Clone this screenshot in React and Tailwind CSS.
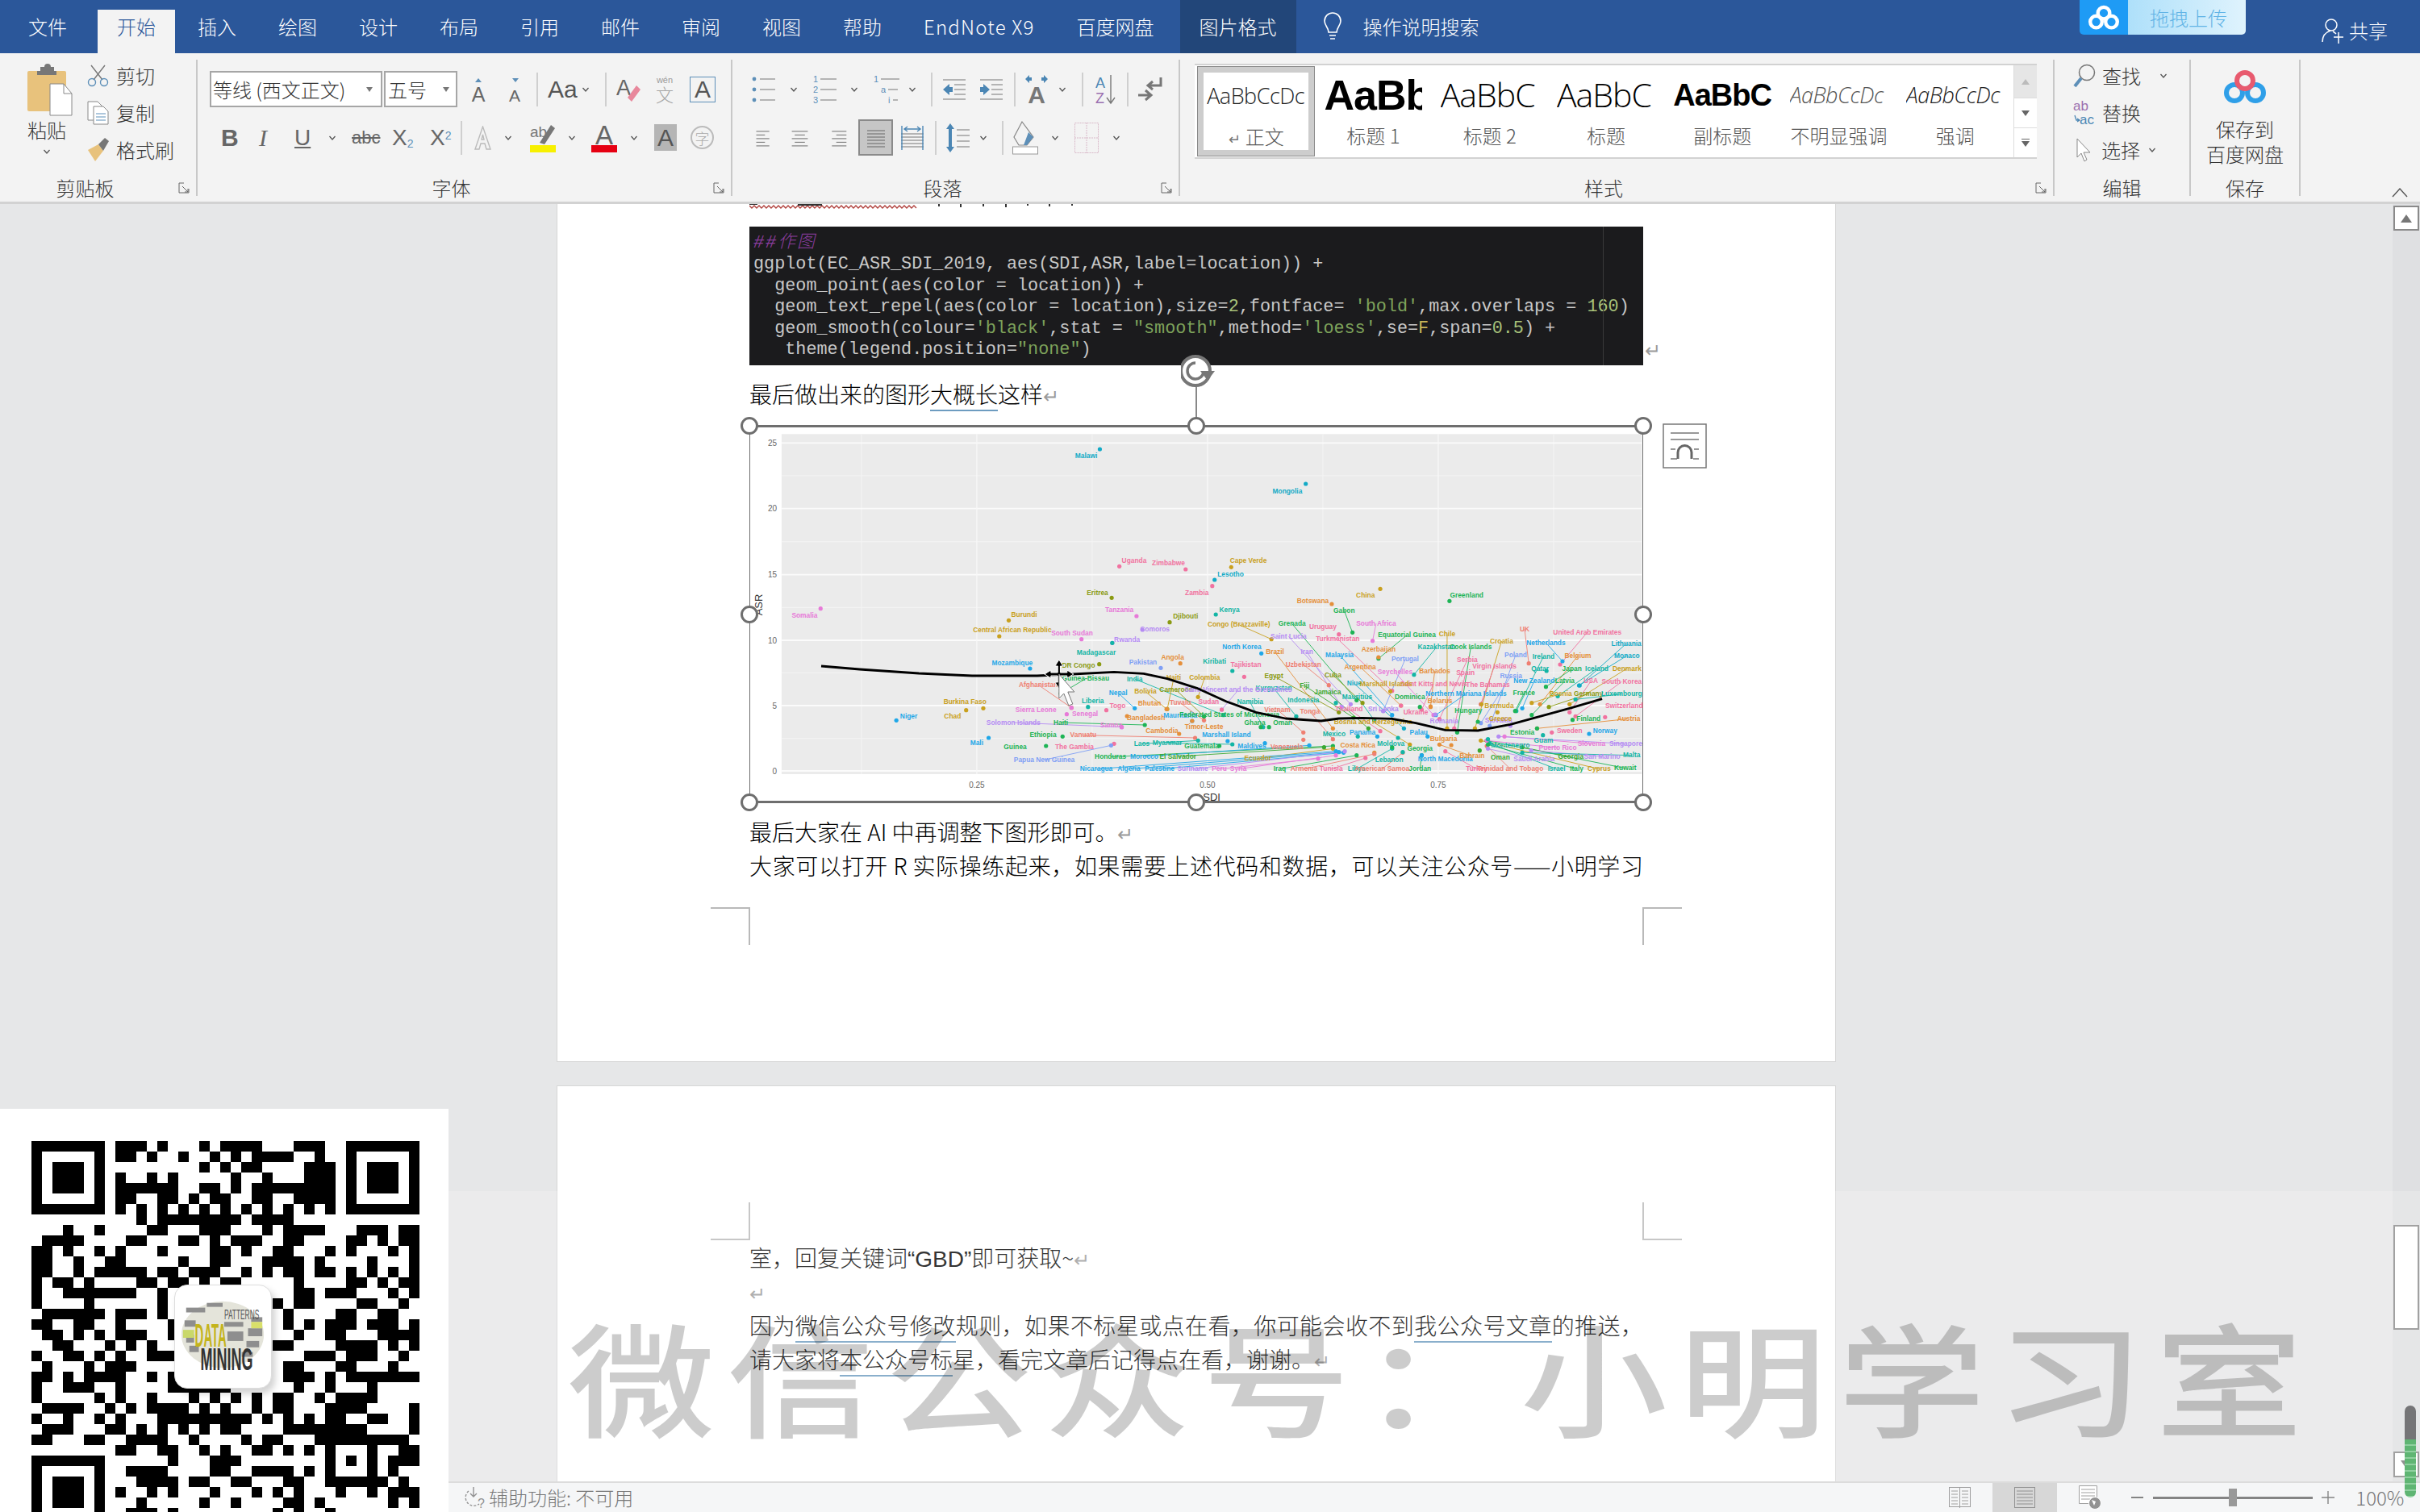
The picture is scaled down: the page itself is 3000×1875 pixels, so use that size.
const QR = [
  '1111111 0 111 0 1 000 1 0 1 111 000 111 00 1111111',
  '1000001 0 11 0 1 00 1 00 1 0 1 0 1111 00 1 00 1000001',
  '1011101 0 00000000 1 0 1 0 11 0000 111 0 1011101',
  '1011101 0 1 00 1 0 1 00000 1 00 1 000 111 0 1011101',
  '1011101 0 111111 00 11 0 1 0 11111111 0 1011101',
  '1000001 0 11 00 11 0 1 0 11 00 11 00 1111 0 1000001',
  '1111111 0 101010101010101010101 0 1111111',
  '0000000000 1 0 11111111 0 1111 000000000000',
  '000 1 00 1 0000 11 000 111 000 1 0 1111 000 111 0 11',
  '0 1111 0000 11 000 11 0 1 0 111 00 11 0000 11 0 1 0 11',
  '11 0 1 00 1 0 1 000 1 0000 11 0 1 00 11 000 1 0 1 000 1 0 1',
  '11 00 1 00 11 00000 1 00 11 000 1111 0 1 0000 1 000 1',
  '11 00 1 0 11111 0 11 0 111 00 1 0 1 0 11 0 11 0 1 0 1 0 1 0 1',
  '1 0 11 0 1 0000 11 0 11 0 1 0 11 00000 1 0000 11 0 1 0 11',
  '1 00 1111111 00 1 000000000000 11 0 111 000 1 0 1',
  '1 0000 1 000000 1 0000000000 1 0 11 0000 11 00 1 0',
  '0 111111 0 111 0 1 00000000000 1 0000 11 00 11 00',
  '11 00 11 00 1 0000 1 0000000000 1 0 1 0 111 0 111 0 1',
  '0 11 0 1 0 1 0 111 00 1 00000000000 1 00 11 000 1111',
  '00 11 000 1 0 1 0 1 00 000000000 11 0000 1111 0 1 0 1',
  '1 00 11 0 1 0 1 00 111 000000000000 111 0 111 00 1 0',
  '0 1 000 1 0 111 0000 0000000000 11 000 11 000 1 00',
  '11 0 1 0 1111 00 1 0 1 0000000000 111 0 1 0 1111111',
  '1 00 111 00 1 0000 111111 000000 1 00 1 000 1 0000',
  '1 00000 1 0 1 00 1 000 1 0 1 0 1 0 1 0 11 00 1 0 1111 0000',
  '0 1111 00 1 0 1 0 1111 0 1 0 1 00 1 0 11 000 1111 0000 1',
  '1 00 1 00 1 0 1 000 111111111 0 1 0 1 0 1 0 11 00 11 00 1',
  '0 111 000 11 0 1 0 1 0 1 0 1 0 11 0000 11111111 0000 1',
  '11 000 11 00 1111 00 1 0000 1 0 11 000 111111111 0',
  '00000000 11 00 11 00 1 0 1 00 11 0 1 0 1 0 1 000 1 00 11',
  '1111111 0 00000 1 000 111 00000000 1 0 1 0 1 0 111',
  '1000001 0 0 1111 0000 11 00 1111 0 1 0 1 000 1 0 1 00',
  '1011101 0 00 1111 0 11 00 11 000 11 00 111111 0 1 0',
  '1011101 0 1 00 1 0 1 000 1 000 1 0 1 0 1 000 1 00 1 0 111',
  '1011101 0 00 1 00000 1 00 1 0000 11 0 1 000000 1 0 1',
  '1000001 0 0 111 0 1 000000000 1 0 1 00 1 00000000',
].map((r) => r.replace(/ /g, ''))

const C = {
  b: '#1fa7e8', c: '#12aac6', t: '#12b5a5', g: '#1db455', G: '#3aa832', l: '#8a9a12', o: '#c9a01e',
  O: '#e58f3a', r: '#ef7f72', k: '#f172a0', p: '#e77ad8', v: '#b58cf3', n: '#7f9ff5',
}

// label, x, y, colour, point x, point y  (taken from the plot, x at 1.3635x and y at 3x)
const LABELS = [
  ['Somalia', 107, 731, 'p', 134, 704], ['Malawi', 583, 135, 'c', 606, 111], ['Mongolia', 923, 267, 'c', 954, 240],
  ['Uganda', 664, 527, 'k', 639, 547], ['Zimbabwe', 722, 535, 'k', 751, 558], ['Cape Verde', 857, 527, 'o', 828, 550],
  ['Lesotho', 827, 577, 'c', 800, 597], ['Zambia', 770, 647, 'k', 796, 620], ['Eritrea', 602, 647, 'l', 626, 664],
  ['China', 1055, 655, 'o', 1080, 631], ['Greenland', 1226, 655, 'g', 1197, 676], ['Botswana', 966, 675, 'O', 998, 687],
  ['Tanzania', 639, 708, 'p', 668, 732], ['Kenya', 825, 709, 't', 802, 726], ['Gabon', 1019, 711, 'g', 1033, 793],
  ['Burundi', 478, 728, 'o', 452, 748], ['Djibouti', 751, 734, 'l', 724, 755], ['Congo (Brazzaville)', 841, 764, 'o', 896, 818],
  ['Grenada', 931, 761, 'g', 1040, 1045], ['Uruguay', 983, 773, 'k', 1010, 800], ['South Africa', 1073, 759, 'p', 1067, 824],
  ['Comoros', 699, 781, 'v', 678, 783], ['Central African Republic', 458, 784, 'o', 436, 807], ['South Sudan', 559, 795, 'p', 575, 818],
  ['Rwanda', 652, 820, 'v', 627, 832], ['Equatorial Guinea', 1125, 803, 'g', 1077, 890], ['Chile', 1193, 800, 'o', 1193, 1150],
  ['UK', 1324, 781, 'r', 1331, 908], ['United Arab Emirates', 1430, 792, 'k', 1384, 912], ['Lithuania', 1496, 834, 'c', 1417, 990],
  ['Saint Lucia', 925, 808, 'v', 1030, 1060], ['Turkmenistan', 1008, 817, 'k', 1100, 1010], ['Croatia', 1285, 825, 'o', 1240, 1150],
  ['Netherlands', 1360, 831, 'b', 1388, 900], ['Madagascar', 600, 868, 't', 627, 832], ['North Korea', 846, 848, 'b', 879, 871],
  ['Iran', 956, 865, 'v', 1015, 1070], ['Azerbaijan', 1077, 857, 'O', 1077, 885], ['Kazakhstan', 1175, 848, 't', 1137, 950],
  ['Cook Islands', 1233, 848, 'g', 1210, 1165], ['Brazil', 902, 866, 'O', 1000, 1150], ['Malaysia', 1011, 876, 'b', 1100, 1100],
  ['Poland', 1309, 876, 'n', 1265, 1140], ['Ireland', 1356, 882, 't', 1310, 1085], ['Belgium', 1414, 879, 'O', 1350, 1060],
  ['Monaco', 1497, 879, 'c', 1416, 990], ['Mozambique', 458, 907, 'b', 488, 927], ['DR Congo', 570, 915, 'l', 605, 911],
  ['Pakistan', 679, 904, 'n', 709, 925], ['Angola', 729, 885, 'O', 742, 908], ['Kiribati', 800, 901, 't', 830, 936],
  ['Tajikistan', 853, 912, 'k', 850, 958], ['Portugal', 1122, 893, 'n', 1085, 1085], ['Serbia', 1227, 896, 'k', 1180, 1115],
  ['Uzbekistan', 950, 912, 'r', 993, 989], ['Virgin Islands', 1273, 918, 'k', 1250, 1060], ['Denmark', 1497, 927, 'o', 1400, 1060],
  ['Iceland', 1446, 927, 't', 1380, 1030], ['Japan', 1404, 929, 'g', 1360, 995], ['Qatar', 1350, 927, 't', 1361, 936],
  ['Seychelles', 1105, 941, 'p', 1170, 1100], ['Argentina', 1046, 921, 'O', 1115, 1065], ['Barbados', 1172, 937, 'O', 1165, 1068],
  ['Spain', 1224, 944, 'k', 1205, 1150], ['Russia', 1301, 954, 'n', 1250, 1130], ['Guinea-Bissau', 582, 965, 'g', 540, 1020],
  ['India', 665, 966, 't', 815, 1100], ['Colombia', 783, 962, 'o', 772, 1033], ['Haiti', 731, 962, 'o', 720, 1078],
  ['Egypt', 900, 955, 'l', 1010, 1090], ['Afghanistan', 502, 988, 'r', 558, 1073], ['New Zealand', 1340, 974, 'b', 1320, 1075],
  ['Latvia', 1392, 974, 'g', 1336, 1100], ['USA', 1436, 974, 'k', 1400, 1090], ['South Korea', 1488, 976, 'k', 1410, 1105],
  ['Fiji', 952, 991, 'G', 1035, 1110], ['Niue', 1036, 983, 'c', 1120, 1150], ['Saint Kitts and Nevis', 1170, 985, 'k', 1150, 1080],
  ['Marshall Islands', 1090, 985, 'o', 1097, 1012], ['The Bahamas', 1262, 988, 'k', 1250, 1060], ['Kyrgyzstan', 900, 1001, 't', 938, 1105],
  ['Nepal', 637, 1018, 'b', 665, 1075], ['Bolivia', 683, 1013, 'o', 719, 1078], ['Cameroon', 735, 1007, 'l', 782, 1105],
  ['Saint Vincent and the Grenadines', 840, 1007, 'v', 812, 1080], ['Jamaica', 991, 1016, 'G', 1060, 1150], ['Dominica', 1130, 1032, 'g', 1147, 1070],
  ['Mauritius', 1041, 1032, 't', 1070, 1120], ['France', 1323, 1019, 'g', 1308, 1085], ['Bosnia', 1385, 1021, 'o', 1336, 1055],
  ['Germany', 1432, 1021, 'l', 1365, 1070], ['Luxembourg', 1488, 1022, 't', 1410, 1042], ['Northern Mariana Islands', 1225, 1021, 'b', 1174, 1100],
  ['Indonesia', 950, 1044, 't', 1005, 1055], ['Sudan', 790, 1052, 'k', 812, 1080], ['Tuvalu', 742, 1055, 'r', 782, 1120], ['Namibia', 860, 1052, 't', 882, 1145],
  ['Burkina Faso', 378, 1052, 'o', 380, 1082], ['Liberia', 594, 1047, 't', 586, 1070], ['Togo', 636, 1067, 'k', 617, 1082],
  ['Bhutan', 690, 1057, 'O', 719, 1078], ['Thailand', 1027, 1078, 'k', 1080, 1160], ['Sri Lanka', 1085, 1077, 'v', 1085, 1085],
  ['Vietnam', 906, 1080, 'r', 950, 1165], ['Tonga', 961, 1087, 'r', 1000, 1190], ['Hungary', 1229, 1084, 'g', 1245, 1125], ['Bermuda', 1281, 1067, 'o', 1251, 1060],
  ['Chad', 357, 1105, 'o', 409, 1075], ['Niger', 283, 1106, 'b', 262, 1120], ['Sierra Leone', 498, 1080, 'p', 550, 1097],
  ['Senegal', 581, 1095, 'p', 558, 1073], ['Bangladesh', 684, 1111, 'O', 652, 1104], ['Mauritania', 742, 1103, 'b', 762, 1122],
  ['Federated States of Micronesia', 825, 1100, 'g', 782, 1105], ['Solomon Islands', 460, 1128, 'v', 643, 1145], ['Haiti', 540, 1128, 'g', 682, 1137],
  ['Samoa', 625, 1137, 'p', 643, 1145], ['Timor-Leste', 782, 1144, 'O', 762, 1122], ['Cambodia', 711, 1159, 'O', 740, 1170],
  ['Ethiopia', 510, 1175, 'g', 543, 1180], ['Vanuatu', 578, 1175, 'r', 767, 1185], ['Marshall Island', 820, 1173, 'b', 822, 1197],
  ['Mali', 398, 1203, 'b', 418, 1185], ['Guinea', 463, 1220, 'g', 515, 1215], ['The Gambia', 563, 1220, 'k', 630, 1207],
  ['Laos', 677, 1207, 't', 772, 1195], ['Myanmar', 720, 1204, 't', 830, 1209], ['Guatemala', 778, 1217, 'g', 808, 1215],
  ['Maldives', 863, 1217, 'b', 885, 1205], ['Venezuela', 922, 1220, 'r', 950, 1192], ['Costa Rica', 1042, 1214, 'O', 1070, 1240],
  ['Papua New Guinea', 512, 1267, 'n', 625, 1213], ['Honduras', 624, 1256, 'g', 1000, 1215], ['Morocco', 681, 1254, 'b', 960, 1213],
  ['El Salvador', 738, 1254, 'G', 985, 1220], ['Ecuador', 873, 1262, 'o', 1000, 1225], ['Nicaragua', 600, 1301, 'b', 1005, 1235],
  ['Algeria', 655, 1301, 'b', 1010, 1238], ['Palestine', 707, 1301, 'b', 1018, 1240], ['Suriname', 763, 1301, 'v', 1020, 1235],
  ['Peru', 808, 1301, 'p', 975, 1262], ['Syria', 840, 1301, 'p', 1005, 1250], ['Iraq', 910, 1301, 'g', 1040, 1250],
  ['Armenia', 951, 1301, 'r', 1070, 1245], ['Tunisia', 997, 1301, 'k', 1055, 1260], ['Libya', 1040, 1301, 't', 1100, 1225],
  ['American Samoa', 1083, 1301, 'r', 1118, 1240], ['Jordan', 1147, 1301, 'g', 1150, 1250], ['Turkey', 1243, 1301, 'k', 1190, 1235],
  ['Trinidad and Tobago', 1300, 1301, 'r', 1260, 1215], ['Israel', 1378, 1301, 't', 1265, 1205], ['Italy', 1412, 1301, 'g', 1262, 1210],
  ['Cyprus', 1450, 1301, 'o', 1250, 1195], ['Kuwait', 1494, 1298, 'g', 1260, 1195], ['Lebanon', 1095, 1267, 't', 1118, 1238],
  ['North Macedonia', 1190, 1265, 'b', 1150, 1250], ['Bahrain', 1235, 1253, 'O', 1180, 1210], ['Oman', 1283, 1257, 'G', 1248, 1232],
  ['Saudi Arabia', 1340, 1265, 'v', 1262, 1225], ['Georgia', 1402, 1256, 'G', 1320, 1220], ['San Marino', 1455, 1254, 'v', 1335, 1232],
  ['Malta', 1505, 1250, 't', 1320, 1240], ['Slovenia', 1437, 1207, 'p', 1290, 1180], ['Singapore', 1495, 1207, 'v', 1280, 1180],
  ['Puerto Rico', 1380, 1222, 'p', 1260, 1195], ['Norway', 1460, 1159, 'b', 1433, 1170], ['Sweden', 1400, 1159, 'k', 1370, 1165],
  ['Finland', 1432, 1113, 'g', 1405, 1118], ['Austria', 1500, 1114, 'O', 1345, 1150], ['Switzerland', 1492, 1067, 'k', 1460, 1108],
  ['Estonia', 1320, 1165, 'g', 1345, 1150], ['Guam', 1356, 1195, 't', 1355, 1175], ['Montenegro', 1300, 1212, 't', 1262, 1190],
  ['Georgia', 1147, 1226, 'g', 1100, 1220], ['Moldova', 1098, 1208, 't', 1110, 1185], ['Bulgaria', 1187, 1190, 'O', 1200, 1212],
  ['Palau', 1145, 1164, 'b', 1160, 1180], ['Panama', 1050, 1164, 'b', 1075, 1180], ['Mexico', 1002, 1170, 't', 1042, 1180],
  ['Cuba', 1000, 951, 'l', 1050, 1055], ['Slovakia', 1280, 1120, 'v', 1300, 1140], ['Romania', 1188, 1122, 'v', 1173, 1098],
  ['Ukraine', 1140, 1090, 'k', 1115, 1065], ['Bosnia and Herzegovina', 1068, 1126, 'o', 1130, 1210], ['Greece', 1283, 1113, 'o', 1278, 1090],
  ['Belarus', 1181, 1047, 'O', 1165, 1070], ['Oman', 915, 1128, 'g', 892, 1145], ['Ghana', 868, 1128, 'g', 878, 1145],
]

const SMOOTH = [[135, 918], [200, 930], [300, 945], [390, 954], [500, 954], [560, 948], [630, 940], [680, 946], [720, 965], [770, 1000], [820, 1050], [870, 1090], [920, 1113], [980, 1122], [1010, 1113], [1050, 1111], [1100, 1114], [1140, 1130], [1190, 1156], [1245, 1158], [1300, 1135], [1350, 1105], [1400, 1075], [1455, 1040]]

const px = (x) => x / 1.3635
const py = (y) => y / 3

function Plot() {
  return (
    <svg className="absolute left-[-11px] top-[-10px] w-[1150px] h-[500px]" viewBox="0 0 1150 500">
      <rect x={px(68)} y={py(55)} width={px(1522) - px(68)} height={py(1320) - py(55)} fill="#ebebeb" />
      {[210, 455, 700, 943, 1187].map((y) => <line key={y} x1={px(68)} x2={px(1522)} y1={py(y)} y2={py(y)} stroke="#f4f4f4" strokeWidth="1" />)}
      {[203, 593, 983, 1373].map((x) => <line key={x} x1={px(x)} x2={px(x)} y1={py(55)} y2={py(1320)} stroke="#f4f4f4" strokeWidth="1" />)}
      {[88, 332, 578, 822, 1065, 1308].map((y) => <line key={y} x1={px(68)} x2={px(1522)} y1={py(y)} y2={py(y)} stroke="#fbfbfb" strokeWidth="1.8" />)}
      {[398, 788, 1178].map((x) => <line key={x} x1={px(x)} x2={px(x)} y1={py(55)} y2={py(1320)} stroke="#f8f8f8" strokeWidth="1.3" />)}
      {[['25', 88], ['20', 332], ['15', 578], ['10', 822], ['5', 1065], ['0', 1308]].map(([t, y]) => (
        <text key={t} x={px(60)} y={py(y) + 3.5} textAnchor="end" fontSize="10" fill="#666" fontFamily="Liberation Sans">{t}</text>
      ))}
      {[['0.25', 398], ['0.50', 788], ['0.75', 1178]].map(([t, x]) => (
        <text key={t} x={px(x)} y={py(1370)} textAnchor="middle" fontSize="10" fill="#666" fontFamily="Liberation Sans">{t}</text>
      ))}
      <text x={px(795)} y={py(1418)} textAnchor="middle" fontSize="13" fill="#333" fontFamily="Liberation Sans">SDI</text>
      <text transform={`translate(${px(36)} ${py(690)}) rotate(-90)`} textAnchor="middle" fontSize="13" fill="#333" fontFamily="Liberation Sans">ASR</text>
      {LABELS.map(([t, x, y, c, x2, y2], i) => (
        Math.hypot(x - x2, (y - y2) * 1.5) > 70 ? <line key={i} x1={px(x)} y1={py(y)} x2={px(x2)} y2={py(y2)} stroke={C[c]} strokeWidth="0.9" /> : null
      ))}
      {LABELS.map(([t, x, y, c, x2, y2], i) => <circle key={i} cx={px(x2)} cy={py(y2)} r="2.6" fill={C[c]} />)}
      {LABELS.map(([t, x, y, c], i) => (
        <text key={i} x={px(x)} y={py(y) + 2.8} textAnchor="middle" fontSize="8.4" fontWeight="700" fill={C[c]} fontFamily="Liberation Sans">{t}</text>
      ))}
      <polyline points={SMOOTH.map(([x, y]) => `${px(x)},${py(y)}`).join(' ')} fill="none" stroke="#000" strokeWidth="2.8" strokeLinejoin="round" />
      <g transform={`translate(${px(537)} ${py(948)})`}>
        <path d="M0 -18 L-5 -10 H-1.6 V-2 H-10 V-5 L-18 0 L-10 5 V2 H-1.6 V10 H-5 L0 18 L5 10 H1.6 V2 H10 V5 L18 0 L10 -5 V-2 H1.6 V-10 H5 Z" fill="#000" stroke="#fff" strokeWidth="1" />
        <path d="M0 0 V30 L6 24 L12 39 L17 37 L11 22 L19 22 Z" fill="#fff" stroke="#777" strokeWidth="1" />
      </g>
    </svg>
  )
}

function Qr() {
  return (
    <div className="absolute left-0 top-[1375px] w-[556px] h-[500px] bg-white overflow-hidden">
      <svg className="absolute left-[39px] top-[40px] w-[481px] h-[468px]" viewBox="0 0 37 36" shapeRendering="crispEdges">
        {QR.map((row, y) => row.split('').map((v, x) => (v === '1' ? <rect key={`${x}-${y}`} x={x} y={y} width="1" height="1" fill="#000" /> : null)))}
      </svg>
      <div className="absolute left-[216px] top-[218px] w-[121px] h-[129px] rounded-[16px] bg-white border border-[#ddd] shadow-[4px_6px_8px_rgba(0,0,0,0.18)]">
        <svg className="w-full h-full" viewBox="0 0 121 129">
          <ellipse cx="60" cy="62" rx="52" ry="42" fill="#e4e4da" />
          {[[14, 28, 24, 6], [12, 44, 14, 8], [40, 22, 20, 5], [96, 40, 14, 6], [92, 54, 18, 10], [90, 70, 16, 8], [14, 62, 10, 10], [18, 76, 12, 8], [62, 46, 24, 6], [66, 58, 20, 12], [84, 84, 14, 6]].map(([x, y, w, h], i) => (
            <rect key={i} x={x} y={y} width={w} height={h} fill="#8e8e8e" />
          ))}
          <rect x="10" y="56" width="14" height="10" fill="#c9d86a" />
          <rect x="96" y="46" width="14" height="8" fill="#d9e06a" />
          <text x="62" y="43" textLength="44" lengthAdjust="spacingAndGlyphs" fontSize="16" fill="#555" fontFamily="Liberation Sans">PATTERNS</text>
          <text x="25" y="77" textLength="40" lengthAdjust="spacingAndGlyphs" fontSize="42" fontWeight="700" fill="#c4b41c" fontFamily="Liberation Sans">DATA</text>
          <text x="32" y="107" textLength="66" lengthAdjust="spacingAndGlyphs" fontSize="40" fontWeight="700" fill="#333" fontFamily="Liberation Sans">MINING</text>
        </svg>
      </div>
    </div>
  )
}

function Chev({ className = '' }) {
  return (
    <svg className={`w-[10px] h-[8px] shrink-0 ${className}`} viewBox="0 0 10 8" fill="none" stroke="#555" strokeWidth="1.3">
      <path d="M1.5 2 L5 6 L8.5 2" />
    </svg>
  )
}

function Sep({ className = '' }) {
  return <div className={`w-[2px] h-[42px] bg-[#cfcfcf] shrink-0 ${className}`} />
}

function Launcher({ className = '' }) {
  return (
    <svg className={`absolute bottom-[3px] w-[14px] h-[14px] ${className}`} viewBox="0 0 14 14" fill="none" stroke="#666" strokeWidth="1">
      <path d="M1 1 H7 M1 1 V13 H13 V8 M5 5 L12 12 M12 8 V12 H8" />
    </svg>
  )
}

function Group({ width, label, launcher, children }) {
  return (
    <div className={`relative flex flex-col shrink-0 border-r-2 border-[#c8c8c8] ${width}`}>
      <div className="flex-1 min-h-0">{children}</div>
      <div className={`h-[28px] -mb-[4px] text-center leading-[28px] text-[24px] text-[#333] ${launcher ? 'pr-[32px]' : ''}`}>{label}</div>
      {launcher && <Launcher className="right-[8px]" />}
    </div>
  )
}

function Lines({ className = '', rows }) {
  return (
    <svg className={`shrink-0 ${className}`} viewBox="0 0 30 30" fill="none" stroke="#777" strokeWidth="1.2">
      {rows.map(([x1, x2, y], i) => <line key={i} x1={x1} x2={x2} y1={y} y2={y} />)}
    </svg>
  )
}

const Row = ({ className = '', children }) => <div className={`flex items-center h-[45px] ${className}`}>{children}</div>

function FontGroup() {
  return (
    <Group width="w-[663px]" label="字体" launcher>
      <Row className="mt-[14px]">
        <div className="ml-[15px] w-[214px] h-[45px] border-2 border-[#a6a6a6] bg-white flex items-center justify-between pl-[2px] pr-[10px] text-[24px] text-[#333] whitespace-nowrap">
          <span>等线 (西文正文)</span><span className="w-0 h-0 border-x-[4px] border-x-transparent border-t-[6px] border-t-[#777]" />
        </div>
        <div className="ml-[2px] w-[91px] h-[45px] border-2 border-[#a6a6a6] bg-white flex items-center justify-between pl-[3px] pr-[8px] text-[24px] text-[#333]">
          <span>五号</span><span className="w-0 h-0 border-x-[4px] border-x-transparent border-t-[6px] border-t-[#777]" />
        </div>
        <svg className="ml-[16px] w-[20px] h-[40px] shrink-0" viewBox="0 0 20 40">
          <path d="M10 6 L14 11 H6 Z" fill="#5d8fb8" /><text x="10" y="35" textAnchor="middle" fontSize="25" fill="#666" fontFamily="Liberation Sans">A</text>
        </svg>
        <svg className="ml-[27px] w-[17px] h-[40px] shrink-0" viewBox="0 0 17 40">
          <path d="M5 6 H13 L9 11 Z" fill="#5d8fb8" /><text x="8" y="35" textAnchor="middle" fontSize="21" fill="#666" fontFamily="Liberation Sans">A</text>
        </svg>
        <Sep className="ml-[18px]" />
        <span className="ml-[12px] w-[32px] text-[30px] leading-none text-[#555] [font-family:'Liberation_Sans',sans-serif]">Aa</span>
        <Chev className="ml-[10px]" />
        <Sep className="ml-[19px]" />
        <svg className="ml-[12px] w-[30px] h-[34px] shrink-0" viewBox="0 0 30 34">
          <text x="0" y="24" fontSize="27" fill="#666" fontFamily="Liberation Sans">A</text>
          <path d="M14 27 L25 12 L30 17 L19 32 Z" fill="#e8889c" />
        </svg>
        <svg className="ml-[18px] w-[25px] h-[38px] shrink-0" viewBox="0 0 25 38">
          <text x="12" y="11" textAnchor="middle" fontSize="11" fill="#9a9a9a" fontFamily="Liberation Sans">wén</text>
          <text x="12" y="34" textAnchor="middle" fontSize="22" fill="#a5a5a5" fontFamily="Noto Sans CJK SC">文</text>
        </svg>
        <div className="ml-[18px] w-[32px] h-[32px] border border-[#5d8fb8] flex items-center justify-center text-[30px] leading-none text-[#555] [font-family:'Liberation_Sans',sans-serif]">A</div>
      </Row>
      <Row className="mt-[15px] [font-family:'Liberation_Sans',sans-serif] text-[#666]">
        <span className="ml-[29px] w-[17px] text-[30px] font-bold leading-none">B</span>
        <span className="ml-[30px] w-[15px] text-[30px] italic font-normal leading-none [font-family:'Liberation_Serif',serif]">I</span>
        <span className="ml-[29px] w-[20px] text-[28px] leading-none underline decoration-2 underline-offset-2">U</span>
        <Chev className="ml-[22px]" />
        <span className="ml-[19px] w-[31px] text-[22px] leading-none line-through">abc</span>
        <span className="ml-[19px] w-[25px] text-[28px] leading-none">X<sub className="text-[14px] text-[#5d8fb8]">2</sub></span>
        <span className="ml-[22px] w-[24px] text-[28px] leading-none">X<sup className="text-[14px] text-[#5d8fb8]">2</sup></span>
        <Sep className="ml-[14px]" />
        <svg className="ml-[15px] w-[21px] h-[30px] shrink-0" viewBox="0 0 21 30" fill="none" stroke="#bbb" strokeWidth="1.4">
          <path d="M1 29 L10.5 1 L20 29 H15 L13 22 H8 L6 29 Z M9 17 H12 L10.5 11 Z" />
        </svg>
        <Chev className="ml-[16px]" />
        <svg className="ml-[22px] w-[32px] h-[36px] shrink-0" viewBox="0 0 32 36">
          <text x="0" y="17" fontSize="19" fill="#777" fontFamily="Liberation Sans">ab</text>
          <path d="M12 24 L26 2 L31 6 L18 26 Z" fill="#777" />
          <rect x="0" y="27" width="32" height="9" fill="#f7f000" />
        </svg>
        <Chev className="ml-[15px]" />
        <svg className="ml-[19px] w-[32px] h-[36px] shrink-0" viewBox="0 0 32 36">
          <text x="16" y="26" textAnchor="middle" fontSize="33" fill="#666" fontFamily="Liberation Sans">A</text>
          <rect x="0" y="27" width="32" height="9" fill="#e60012" />
        </svg>
        <Chev className="ml-[16px]" />
        <div className="ml-[20px] w-[28px] h-[33px] bg-[#b5b5b5] flex items-center justify-center text-[30px] leading-none text-[#555]">A</div>
        <div className="ml-[17px] w-[29px] h-[29px] rounded-full border-2 border-[#bbb] flex items-center justify-center text-[18px] leading-none text-[#aaa] [font-family:'Noto_Sans_CJK_SC',sans-serif]">字</div>
      </Row>
    </Group>
  )
}

const L_LEFT = [[5, 23, 6], [5, 17, 11], [5, 23, 16], [5, 17, 21], [5, 23, 26]]
const L_CENTER = [[4, 26, 6], [8, 22, 11], [4, 26, 16], [8, 22, 21], [4, 26, 26]]
const L_RIGHT = [[7, 27, 6], [13, 27, 11], [7, 27, 16], [13, 27, 21], [7, 27, 26]]
const L_JUST = [[4, 26, 6], [4, 26, 10], [4, 26, 14], [4, 26, 18], [4, 26, 22], [4, 26, 26]]

function ParagraphGroup() {
  return (
    <Group width="w-[555px]" label="段落" launcher>
      <Row className="mt-[14px]">
        <svg className="ml-[24px] w-[30px] h-[38px] shrink-0" viewBox="0 0 30 38" fill="#5d8fb8" stroke="#777" strokeWidth="1.2">
          <circle cx="3" cy="6" r="2.4" stroke="none" /><circle cx="3" cy="19" r="2.4" stroke="none" /><circle cx="3" cy="32" r="2.4" stroke="none" />
          <path d="M10 6 H29 M10 19 H29 M10 32 H29" />
        </svg>
        <Chev className="ml-[17px]" />
        <svg className="ml-[19px] w-[29px] h-[38px] shrink-0" viewBox="0 0 29 38" stroke="#777" strokeWidth="1.2">
          <text x="0" y="10" fontSize="11" fill="#5d8fb8" stroke="none" fontFamily="Liberation Sans">1</text>
          <text x="0" y="23" fontSize="11" fill="#5d8fb8" stroke="none" fontFamily="Liberation Sans">2</text>
          <text x="0" y="36" fontSize="11" fill="#5d8fb8" stroke="none" fontFamily="Liberation Sans">3</text>
          <path d="M9 6 H29 M9 19 H29 M9 32 H29" />
        </svg>
        <Chev className="ml-[17px]" />
        <svg className="ml-[19px] w-[32px] h-[38px] shrink-0" viewBox="0 0 32 38" stroke="#777" strokeWidth="1.2">
          <text x="0" y="10" fontSize="11" fill="#5d8fb8" stroke="none" fontFamily="Liberation Sans">1</text>
          <text x="9" y="23" fontSize="11" fill="#5d8fb8" stroke="none" fontFamily="Liberation Sans">a</text>
          <text x="18" y="36" fontSize="11" fill="#5d8fb8" stroke="none" fontFamily="Liberation Sans">i</text>
          <path d="M9 6 H32 M18 19 H30 M24 32 H30" />
        </svg>
        <Chev className="ml-[11px]" />
        <Sep className="ml-[18px]" />
        <svg className="ml-[13px] w-[28px] h-[28px] shrink-0" viewBox="0 0 28 28" stroke="#777" strokeWidth="1.2">
          <path d="M0 2 H28 M14 8 H28 M14 14 H28 M14 20 H28 M0 26 H28" /><path d="M0 14 L8 7 V11 H12 V17 H8 V21 Z" fill="#4b86b4" stroke="none" />
        </svg>
        <svg className="ml-[18px] w-[28px] h-[28px] shrink-0" viewBox="0 0 28 28" stroke="#777" strokeWidth="1.2">
          <path d="M0 2 H28 M14 8 H28 M14 14 H28 M14 20 H28 M0 26 H28" /><path d="M12 14 L4 7 V11 H0 V17 H4 V21 Z" fill="#4b86b4" stroke="none" />
        </svg>
        <Sep className="ml-[14px]" />
        <svg className="ml-[11px] w-[30px] h-[36px] shrink-0" viewBox="0 0 30 36">
          <path d="M1 5 L6 0 V3 H9 V7 H6 V10 Z M29 5 L24 0 V3 H21 V7 H24 V10 Z" fill="#4b86b4" />
          <text x="15" y="35" textAnchor="middle" fontSize="30" fontWeight="700" fill="#777" fontFamily="Liberation Sans">A</text>
        </svg>
        <Chev className="ml-[12px]" />
        <Sep className="ml-[19px]" />
        <svg className="ml-[15px] w-[26px] h-[38px] shrink-0" viewBox="0 0 26 38">
          <text x="0" y="17" fontSize="18" fill="#4b86b4" fontFamily="Liberation Sans">A</text>
          <text x="0" y="36" fontSize="18" fill="#9a6fb0" fontFamily="Liberation Sans">Z</text>
          <path d="M19 1 V35 M14 29 L19 36 L24 29" fill="none" stroke="#777" strokeWidth="1.4" />
        </svg>
        <Sep className="ml-[13px]" />
        <svg className="ml-[12px] w-[30px] h-[32px] shrink-0" viewBox="0 0 30 32" fill="none" stroke="#777" strokeWidth="3">
          <path d="M28 1 V11 H14 M18 6 L12 11 L18 16" /><path d="M0 23 H14 M9 17 L16 23 L9 29" />
        </svg>
      </Row>
      <Row className="mt-[15px]">
        <Lines className="ml-[25px] w-[27px] h-[30px]" rows={L_LEFT} />
        <Lines className="ml-[18px] w-[27px] h-[30px]" rows={L_CENTER} />
        <Lines className="ml-[20px] w-[27px] h-[30px]" rows={L_RIGHT} />
        <div className="ml-[12px] w-[43px] h-[45px] bg-[#c6c6c6] border-2 border-[#8a8a8a] flex items-center justify-center shrink-0">
          <Lines className="w-[30px] h-[30px]" rows={L_JUST} />
        </div>
        <svg className="ml-[10px] w-[28px] h-[30px] shrink-0" viewBox="0 0 28 30" fill="none" stroke="#777" strokeWidth="1.2">
          <path d="M0 10 H28 M0 14 H28 M0 18 H28 M0 22 H28 M0 26 H28" />
          <path d="M4 4 H24 M8 1 L4 4 L8 7 M20 1 L24 4 L20 7 M1 0 V30 M27 0 V30" stroke="#4b86b4" strokeWidth="1.4" />
        </svg>
        <Sep className="ml-[14px]" />
        <svg className="ml-[11px] w-[30px] h-[38px] shrink-0" viewBox="0 0 30 38">
          <path d="M6 1 L1 8 H4 V30 H1 L6 37 L11 30 H8 V8 H11 Z" fill="#4b86b4" />
          <path d="M14 9 H30 M14 16 H30 M14 23 H30 M14 30 H30" stroke="#777" strokeWidth="1.2" />
        </svg>
        <Chev className="ml-[12px]" />
        <Sep className="ml-[18px]" />
        <svg className="ml-[11px] w-[32px] h-[42px] shrink-0" viewBox="0 0 32 42" fill="none">
          <path d="M12 1 L26 20 L18 30 H8 L2 20 Z" stroke="#888" strokeWidth="1.2" />
          <path d="M20 14 L26 20 L18 30 H14 Z" fill="#5d8fb8" />
          <rect x="0.5" y="32" width="31" height="9" fill="#fff" stroke="#999" />
        </svg>
        <Chev className="ml-[16px]" />
        <svg className="ml-[19px] w-[30px] h-[38px] shrink-0" viewBox="0 0 30 38" fill="none" stroke="#d9b8c8" strokeWidth="1" strokeDasharray="2 1">
          <rect x="0.5" y="0.5" width="29" height="37" /><path d="M15 0 V38 M0 19 H30" />
        </svg>
        <Chev className="ml-[17px]" />
      </Row>
    </Group>
  )
}

function StyleItem({ name, previewClass, preview, selected, mark }) {
  return (
    <div className={`relative flex-1 min-w-0 flex flex-col items-center ${selected ? 'border border-[#8a8a8a] bg-white' : ''}`}>
      {selected && <div className="absolute inset-0 border-[7px] border-[#cdcdcd]" />}
      <div className="h-[72px] w-[122px] flex items-center overflow-hidden whitespace-nowrap">
        <span className={previewClass}>{preview}</span>
      </div>
      <div className="text-[24px] leading-[28px] text-[#555] whitespace-nowrap">
        {mark && <span className="text-[#777] text-[18px] mr-[6px] [font-family:'DejaVu_Sans',sans-serif]">↵</span>}{name}
      </div>
    </div>
  )
}

function StylesGroup() {
  const thin = "text-[27px] font-light tracking-[-0.5px] text-[#222] [font-family:'Open_Sans',sans-serif]"
  const ital = "text-[27px] font-light italic tracking-[-0.5px] [font-family:'Open_Sans',sans-serif]"
  return (
    <Group width="w-[1084px]" label="样式" launcher>
      <div className="mt-[5px] ml-[18px] w-[1044px] h-[118px] flex bg-white border-y-2 border-[#d2d2d2] pl-[3px]">
        <div className="flex-1 min-w-0 flex py-[1px]">
          <StyleItem selected mark name="正文" preview="AaBbCcDc" previewClass={thin} />
          <StyleItem name="标题 1" preview="AaBbCc" previewClass="text-[52px] font-bold text-black [font-family:'Liberation_Sans',sans-serif] tracking-[-1px]" />
          <StyleItem name="标题 2" preview="AaBbC" previewClass="text-[41px] font-light text-black [font-family:'Open_Sans',sans-serif] tracking-[-1px]" />
          <StyleItem name="标题" preview="AaBbC" previewClass="text-[41px] font-light text-black [font-family:'Open_Sans',sans-serif] tracking-[-1px]" />
          <StyleItem name="副标题" preview="AaBbC" previewClass="text-[38px] font-bold text-black [font-family:'Liberation_Sans',sans-serif] tracking-[-1px]" />
          <StyleItem name="不明显强调" preview="AaBbCcDc" previewClass={`${ital} text-[#555]`} />
          <StyleItem name="强调" preview="AaBbCcDc" previewClass={`${ital} text-[#222]`} />
        </div>
        <div className="w-[29px] flex flex-col border-l border-[#ddd] shrink-0">
          <div className="h-[40px] bg-[#e6e6e6] flex items-center justify-center"><span className="w-0 h-0 border-x-[5px] border-x-transparent border-b-[7px] border-b-[#bbb]" /></div>
          <div className="h-[38px] border-y border-[#ddd] flex items-center justify-center"><span className="w-0 h-0 border-x-[5px] border-x-transparent border-t-[7px] border-t-[#666]" /></div>
          <div className="flex-1 flex flex-col items-center justify-center gap-[2px]"><span className="w-[10px] h-[1px] bg-[#666]" /><span className="w-0 h-0 border-x-[5px] border-x-transparent border-t-[7px] border-t-[#666]" /></div>
        </div>
      </div>
    </Group>
  )
}

function BaiduLogo({ className = '', top = '#fff', left = '#fff', right = '#fff' }) {
  return (
    <svg className={className} viewBox="0 0 52 42" fill="none" strokeWidth="6">
      <circle cx="13" cy="28" r="10" stroke={left} />
      <circle cx="39" cy="28" r="10" stroke={right} />
      <circle cx="26" cy="13" r="10" stroke={top} />
    </svg>
  )
}

function Ribbon() {
  return (
    <div className="flex h-[187px] pt-[8px] pb-[7px] bg-[#f3f3f3] border-b-[3px] border-[#d2d2d2] shrink-0">
      <Group width="w-[245px]" label="剪贴板" launcher>
        <div className="flex">
          <div className="ml-[33px] w-[50px] flex flex-col items-center shrink-0">
            <svg className="w-[58px] h-[70px] -mr-[8px] shrink-0" viewBox="0 0 58 70">
              <rect x="1" y="14" width="48" height="50" rx="2" fill="#e8c27c" />
              <path d="M17 14 V9 H22 A4 4 0 0 1 30 9 H34 V14 H37 V19 H13 V14 Z" fill="#777" />
              <path d="M29 30 H46 L56 42 V69 H29 Z" fill="#fff" stroke="#888" strokeWidth="1" />
              <path d="M46 30 V42 H56" fill="none" stroke="#888" />
            </svg>
            <span className="mt-[2px] text-[24px] leading-[30px] text-[#333] whitespace-nowrap">粘贴</span>
            <Chev className="mt-[8px]" />
          </div>
          <div className="ml-[25px] -mt-[3px] flex flex-col text-[24px] text-[#333]">
            <div className="flex items-center h-[46px]">
              <svg className="w-[27px] h-[28px] shrink-0" viewBox="0 0 27 28" fill="none" stroke="#777" strokeWidth="1.4">
                <path d="M5 1 L19 19 M22 1 L8 19" /><circle cx="6" cy="22" r="4.5" stroke="#5d8fb8" /><circle cx="21" cy="22" r="4.5" stroke="#5d8fb8" />
              </svg>
              <span className="ml-[9px] whitespace-nowrap">剪切</span>
            </div>
            <div className="flex items-center h-[46px]">
              <svg className="w-[27px] h-[30px] shrink-0" viewBox="0 0 27 30" fill="#fff" stroke="#888" strokeWidth="1">
                <path d="M1 1 H13 L18 6 V24 H1 Z" /><path d="M8 7 H20 L26 13 V29 H8 Z" />
                <path d="M11 16 H23 M11 20 H23 M11 24 H23" stroke="#5d8fb8" />
              </svg>
              <span className="ml-[9px] whitespace-nowrap">复制</span>
            </div>
            <div className="flex items-center h-[46px]">
              <svg className="w-[27px] h-[30px] shrink-0" viewBox="0 0 27 30">
                <path d="M1 15 L14 8 L20 16 L10 29 Z" fill="#e8c27c" /><path d="M14 8 L22 0 L27 4 L20 16 Z" fill="#777" />
              </svg>
              <span className="ml-[9px] whitespace-nowrap">格式刷</span>
            </div>
          </div>
        </div>
      </Group>
      <FontGroup />
      <ParagraphGroup />
      <StylesGroup />
      <Group width="w-[169px]" label="编辑">
        <div className="-mt-[3px] flex flex-col text-[24px] text-[#333]">
          <div className="flex items-center h-[46px]">
            <svg className="ml-[23px] w-[28px] h-[30px] shrink-0" viewBox="0 0 28 30" fill="none">
              <circle cx="17" cy="11" r="9.5" stroke="#777" strokeWidth="1.5" /><path d="M10 18 L2 28" stroke="#5d8fb8" strokeWidth="4" />
            </svg>
            <span className="ml-[8px] whitespace-nowrap">查找</span><Chev className="ml-[23px]" />
          </div>
          <div className="flex items-center h-[46px]">
            <svg className="ml-[23px] w-[30px] h-[34px] shrink-0" viewBox="0 0 30 34">
              <text x="0" y="14" fontSize="17" fill="#9a6fb0" fontFamily="Liberation Sans">ab</text>
              <text x="8" y="31" fontSize="17" fill="#4b86b4" fontFamily="Liberation Sans">ac</text>
              <path d="M2 20 L4 26 H8 M5 24 L8 26 L5 28" fill="none" stroke="#4b86b4" strokeWidth="1.3" />
            </svg>
            <span className="ml-[6px] whitespace-nowrap">替换</span>
          </div>
          <div className="flex items-center h-[46px]">
            <svg className="ml-[26px] w-[20px] h-[30px] shrink-0" viewBox="0 0 20 30" fill="#fff" stroke="#888" strokeWidth="1">
              <path d="M2 1 V24 L7 19 L11 29 L14 27 L10 18 L18 18 Z" />
            </svg>
            <span className="ml-[12px] whitespace-nowrap">选择</span><Chev className="ml-[10px]" />
          </div>
        </div>
      </Group>
      <Group width="w-[136px]" label="保存">
        <div className="flex flex-col items-center pt-[13px] text-[24px] leading-[31px] text-[#333]">
          <BaiduLogo className="w-[52px] h-[42px]" top="#e85a6e" left="#2f9fe8" right="#2f9fe8" />
          <span className="mt-[15px] whitespace-nowrap">保存到</span>
          <span className="whitespace-nowrap">百度网盘</span>
        </div>
      </Group>
      <svg className="ml-[113px] self-end -mb-[2px] w-[20px] h-[12px] shrink-0" viewBox="0 0 20 12" fill="none" stroke="#555" strokeWidth="1.4">
        <path d="M1 11 L10 1 L19 11" />
      </svg>
    </div>
  )
}

function TabBar() {
  const tabs = ['插入', '绘图', '设计', '布局', '引用', '邮件', '审阅', '视图', '帮助']
  return (
    <div className="relative flex h-[66px] bg-[#2b579a] text-white text-[24px] shrink-0">
      <div className="ml-[11px] px-[24px] flex items-center">文件</div>
      <div className="ml-[14px] mt-[12px] px-[24px] flex items-center bg-[#f3f3f3] text-[#2b579a] pb-[12px]">开始</div>
      {tabs.map((t) => <div key={t} className="ml-[4px] px-[24px] flex items-center whitespace-nowrap">{t}</div>)}
      <div className="ml-[4px] px-[24px] flex items-center whitespace-nowrap tracking-[1.2px]">EndNote X9</div>
      <div className="ml-[4px] px-[24px] flex items-center whitespace-nowrap">百度网盘</div>
      <div className="ml-[8px] px-[24px] flex items-center bg-[#224679]">图片格式</div>
      <svg className="ml-[33px] self-center w-[24px] h-[36px]" viewBox="0 0 24 36" fill="none" stroke="#fff" strokeWidth="1.6">
        <path d="M7 25 C7 19 2 17 2 11 A10 10 0 0 1 22 11 C22 17 17 19 17 25 Z M8 29 H16 M9 33 H15" />
      </svg>
      <div className="ml-[26px] flex items-center whitespace-nowrap">操作说明搜索</div>
      <div className="absolute left-[2578px] top-0 w-[206px] h-[43px] flex rounded-b-[5px] overflow-hidden">
        <div className="w-[60px] bg-[#1e9bf5] flex items-center justify-center"><BaiduLogo className="w-[38px] h-[38px]" /></div>
        <div className="flex-1 bg-gradient-to-r from-[#aee0fa] to-[#dff3fd] flex items-center pl-[27px] text-[#62b4e6] text-[24px]">拖拽上传</div>
      </div>
      <div className="absolute left-[2877px] top-[20px] flex items-center">
        <svg className="w-[28px] h-[32px]" viewBox="0 0 28 32" fill="none" stroke="#fff" strokeWidth="1.5">
          <circle cx="13" cy="9" r="7" /><path d="M2 30 C2 22 6 18 12 16 M15 17 C17 18 18 19 19 20 M16 24 H28 M22 18 V32" />
        </svg>
        <span className="ml-[7px]">共享</span>
      </div>
    </div>
  )
}

const Ret = () => <span className="text-[#9b9b9b] text-[24px] leading-none [font-family:'DejaVu_Sans',sans-serif]">↵</span>

function Corner({ className = '' }) {
  return <div className={`absolute w-[49px] h-[47px] border-[#b9b9b9] ${className}`} />
}

function CodeBlock() {
  const str = 'text-[#7ea35b]'
  const num = 'text-[#a8c27a]'
  return (
    <div className="relative h-[172px] bg-[#1b1b1d] pl-[5px] pt-[8px] text-[21.8px] leading-[26.4px] text-[#c8c8c8] whitespace-pre [font-family:'Liberation_Mono','Noto_Sans_CJK_SC',monospace]">
      <div className="italic tracking-[2px] text-[#8a3d9e]">##作图</div>
      <div>ggplot(EC_ASR_SDI_2019, aes(SDI,ASR,label=location)) +</div>
      <div>  geom_point(aes(color = location)) +</div>
      <div>  geom_text_repel(aes(color = location),size=<span className={num}>2</span>,fontface= <span className={str}>'bold'</span>,max.overlaps = <span className={num}>160</span>)</div>
      <div>  geom_smooth(colour=<span className={str}>'black'</span>,stat = <span className={str}>"smooth"</span>,method=<span className={str}>'loess'</span>,se=<span className="text-[#c9b458]">F</span>,span=<span className={num}>0.5</span>) +</div>
      <div>   theme(legend.position=<span className={str}>"none"</span>)</div>
      <div className="absolute top-0 bottom-0 right-[49px] w-[1px] bg-[#3a3a3a]" />
      <span className="absolute right-[-22px] top-[142px]"><Ret /></span>
    </div>
  )
}

function Handle({ className = '' }) {
  return <div className={`absolute w-[22px] h-[22px] rounded-full bg-white border-[3px] border-[#6e6e6e] ${className}`} />
}

function PictureFrame() {
  return (
    <div className="relative mt-[18px] h-[469px] border-y-[3px] border-x border-[#6e6e6e]">
      <Plot />
      <div className="absolute left-[552px] top-[-53px] w-[2px] h-[53px] bg-[#888]" />
      <svg className="absolute left-[534px] top-[-91px] w-[50px] h-[42px]" viewBox="0 0 50 42" fill="none">
        <circle cx="18" cy="21" r="18" fill="#fff" stroke="#777" strokeWidth="4" />
        <path d="M28 22 A10 10 0 1 1 18 11" stroke="#777" strokeWidth="3.5" />
        <path d="M24 21 H42 L33 33 Z" fill="#777" />
      </svg>
      <Handle className="left-[-12px] top-[-13px]" />
      <Handle className="left-[542px] top-[-13px]" />
      <Handle className="right-[-12px] top-[-13px]" />
      <Handle className="left-[-12px] top-[221px]" />
      <Handle className="right-[-12px] top-[221px]" />
      <Handle className="left-[-12px] bottom-[-13px]" />
      <Handle className="left-[542px] bottom-[-13px]" />
      <Handle className="right-[-12px] bottom-[-13px]" />
      <svg className="absolute left-[1131px] top-[-5px] w-[55px] h-[56px]" viewBox="0 0 55 56" fill="#fff" stroke="#777" strokeWidth="1.5">
        <rect x="1" y="1" width="53" height="54" />
        <path d="M10 12 H45 M10 20 H45 M10 44 H18 M38 44 H45 M10 32 H16 M39 32 H45" />
        <path d="M19 44 V36 A8.5 8.5 0 0 1 36 36 V44" strokeWidth="3" stroke="#666" />
      </svg>
    </div>
  )
}

function Page1() {
  return (
    <div className="relative h-[1064px] bg-white border-x border-b border-[#d6d6d6] px-[238px]">
      <svg className="block w-[420px] h-[6px]" viewBox="0 0 420 6" fill="none">
        <path d="M0 2 L3 5 L6 2 L9 5 L12 2 L15 5 L18 2 L21 5 L24 2 L27 5 L30 2 L33 5 L36 2 L39 5 L42 2 L45 5 L48 2 L51 5 L54 2 L57 5 L60 2 L63 5 L66 2 L69 5 L72 2 L75 5 L78 2 L81 5 L84 2 L87 5 L90 2 L93 5 L96 2 L99 5 L102 2 L105 5 L108 2 L111 5 L114 2 L117 5 L120 2 L123 5 L126 2 L129 5 L132 2 L135 5 L138 2 L141 5 L144 2 L147 5 L150 2 L153 5 L156 2 L159 5 L162 2 L165 5 L168 2 L171 5 L174 2 L177 5 L180 2 L183 5 L186 2 L189 5 L192 2 L195 5 L198 2 L201 5 L204 2 L207 5" stroke="#b0403c" strokeWidth="1.4" />
        <path d="M0 0 H10 M60 1 H90 M235 0 V3 M262 0 V4 M290 0 V3 M318 0 V4 M345 0 V2 M372 0 V3 M400 0 V2" stroke="#333" strokeWidth="2" />
      </svg>
      <div className="mt-[22px]"><CodeBlock /></div>
      <div className="mt-[14px] h-[42px] text-[28px] leading-[42px] text-black">
        最后做出来的图形<span className="border-b-2 border-[#6d9cc0]">大概长</span>这样<Ret />
      </div>
      <PictureFrame />
      <div className="mt-[14px] h-[42px] text-[28px] leading-[42px] text-black">最后大家在 AI 中再调整下图形即可。<Ret /></div>
      <div className="h-[42px] text-[28px] leading-[42px] text-black text-justify [text-align-last:justify]">大家可以打开 R 实际操练起来，如果需要上述代码和数据，可以关注公众号——小明学习</div>
      <Corner className="left-[190px] top-[872px] border-t-2 border-r-2" />
      <Corner className="right-[190px] top-[872px] border-t-2 border-l-2" />
    </div>
  )
}

function Page2() {
  return (
    <div className="relative flex-1 mt-[29px] bg-white border-x border-t border-[#d6d6d6] px-[238px] pt-[191px] text-[28px] leading-[42px] text-black">
      <Corner className="left-[190px] top-[144px] border-b-2 border-r-2" />
      <Corner className="right-[190px] top-[144px] border-b-2 border-l-2" />
      <div className="h-[42px]">室，回复关键词<span className="[font-family:'Liberation_Sans',sans-serif]">“GBD”</span>即可获取~<Ret /></div>
      <div className="h-[42px]"><Ret /></div>
      <div className="h-[42px] text-justify [text-align-last:justify]">
        因为<span className="border-b-2 border-[#6d9cc0]">微信公众号修改</span>规则，如果不标星或点在看，你可能会收不到<span className="border-b-2 border-[#6d9cc0]">我公众号文章</span>的推送，
      </div>
      <div className="h-[42px]">请大家将<span className="border-b-2 border-[#6d9cc0]">本公众号标</span>星，看完文章后记得点在看，谢谢。<Ret /></div>
    </div>
  )
}

function ScrollBar() {
  return (
    <div className="w-[34px] shrink-0 bg-[#dfe0e2] flex flex-col items-center pt-[2px] pb-[5px] ml-auto">
      <div className="w-[32px] h-[31px] bg-white border-2 border-[#8a8a8a] flex items-center justify-center shrink-0">
        <span className="w-0 h-0 border-x-[7px] border-x-transparent border-b-[10px] border-b-[#777]" />
      </div>
      <div className="mt-[1233px] w-[32px] h-[130px] bg-white border-2 border-[#8a8a8a] shrink-0" />
      <div className="mt-auto w-[32px] h-[32px] bg-white border-2 border-[#8a8a8a] flex items-center justify-center shrink-0">
        <span className="w-0 h-0 border-x-[7px] border-x-transparent border-t-[10px] border-t-[#777]" />
      </div>
    </div>
  )
}

function StatusBar() {
  return (
    <div className="flex items-center h-[38px] bg-[#f3f4f6] border-t-2 border-[#d4d4d4] text-[24px] text-[#555] shrink-0">
      <svg className="ml-[574px] w-[28px] h-[28px] shrink-0" viewBox="0 0 28 28" fill="none" stroke="#777" strokeWidth="1.4">
        <path d="M13 1 V13 M9 9 L13 13 L17 9" /><path d="M7 6 A10 10 0 1 0 20 22" strokeDasharray="3 2" /><text x="18" y="27" fontSize="16" fill="#777" stroke="none" fontFamily="Liberation Sans">?</text>
      </svg>
      <span className="ml-[4px] whitespace-nowrap">辅助功能: 不可用</span>
      <svg className="ml-[1631px] w-[27px] h-[26px] shrink-0" viewBox="0 0 27 26" fill="none" stroke="#888" strokeWidth="1">
        <rect x="0.5" y="0.5" width="26" height="24" /><path d="M13.5 0 V26 M3 5 H11 M3 9 H11 M3 13 H11 M3 17 H11 M3 21 H11 M16 5 H24 M16 9 H24 M16 13 H24 M16 17 H24 M16 21 H24" />
      </svg>
      <div className="ml-[27px] w-[80px] h-[36px] bg-[#cdcdcd] flex items-center justify-center shrink-0">
        <svg className="w-[26px] h-[26px]" viewBox="0 0 26 26" fill="none" stroke="#777" strokeWidth="1">
          <rect x="0.5" y="0.5" width="25" height="25" /><path d="M3 5 H23 M3 9 H23 M3 13 H23 M3 17 H23 M3 21 H23" />
        </svg>
      </div>
      <svg className="ml-[27px] w-[28px] h-[30px] shrink-0" viewBox="0 0 28 30">
        <path d="M0.5 0.5 H22.5 V22.5 H0.5 Z M3 5 H20 M3 9 H20 M3 13 H20 M3 17 H14" fill="#fff" stroke="#888" strokeWidth="1" />
        <circle cx="20" cy="22" r="7.5" fill="#777" stroke="#fff" />
        <path d="M16 18 L21 20 L19 25 Z" fill="#fff" />
      </svg>
      <div className="ml-[37px] w-[15px] h-[2px] bg-[#666] shrink-0" />
      <div className="relative ml-[12px] w-[198px] h-[3px] bg-[#666] shrink-0">
        <div className="absolute left-[94px] top-[-10px] w-[10px] h-[22px] bg-[#808080]" />
      </div>
      <svg className="ml-[11px] w-[16px] h-[16px] shrink-0" viewBox="0 0 16 16" stroke="#666" strokeWidth="1.4"><path d="M0 8 H16 M8 0 V16" /></svg>
      <span className="ml-[26px] whitespace-nowrap">100%</span>
    </div>
  )
}

export default function App() {
  return (
    <div className="relative w-[3000px] h-[1875px] overflow-hidden flex flex-col bg-[#e6e7e8] font-light [font-family:'Noto_Sans_CJK_SC','Noto_Sans',sans-serif]">
      <TabBar />
      <Ribbon />
      <div className="flex-1 min-h-0 flex">
        <div className="ml-[690px] w-[1586px] flex flex-col shrink-0">
          <Page1 />
          <Page2 />
        </div>
        <ScrollBar />
      </div>
      <StatusBar />
      <div className="absolute left-0 right-0 top-[1477px] bottom-0 bg-white/20 pointer-events-none" />
      <div className="absolute left-[704px] top-[1610px] whitespace-nowrap origin-left scale-x-[1.2] text-[152px] leading-[190px] font-medium tracking-[12px] text-black/20 pointer-events-none">
        微信公众号：小明学习室
      </div>
      <Qr />
      <div className="absolute left-[2981px] top-[1743px] w-[14px] h-[114px] rounded-full overflow-hidden flex flex-col">
        <div className="h-[42px] bg-[#757577]" />
        <div className="flex-1 bg-[repeating-linear-gradient(to_bottom,#5fb573_0px,#5fb573_6px,#8fd09f_6px,#8fd09f_8px)]" />
      </div>
    </div>
  )
}
